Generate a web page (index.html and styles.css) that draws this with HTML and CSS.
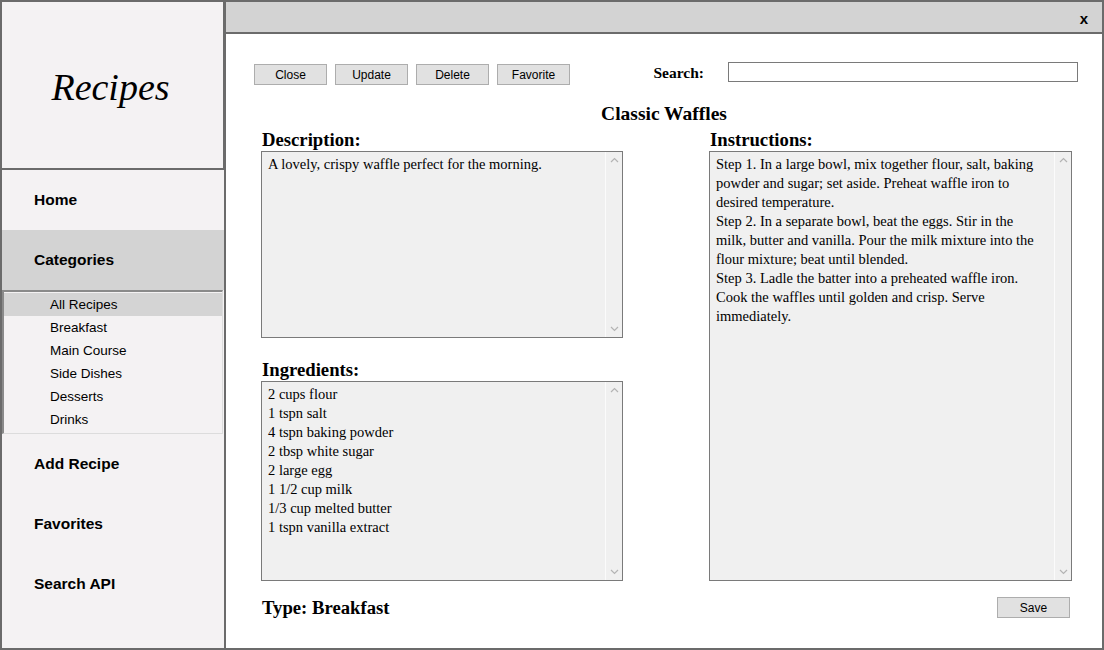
FILE: index.html
```html
<!DOCTYPE html>
<html>
<head>
<meta charset="utf-8">
<link rel="stylesheet" href="styles.css">
</head>
<body>
<div class="app">
  <aside class="sidebar">
    <div class="brand"><span class="brand-text">Recipes</span></div>
    <div class="nav-item">Home</div>
    <div class="nav-item active">Categories</div>
    <div class="cat-list">
      <div class="cat selected">All Recipes</div>
      <div class="cat">Breakfast</div>
      <div class="cat">Main Course</div>
      <div class="cat">Side Dishes</div>
      <div class="cat">Desserts</div>
      <div class="cat">Drinks</div>
    </div>
    <div class="nav-item">Add Recipe</div>
    <div class="nav-item">Favorites</div>
    <div class="nav-item">Search API</div>
  </aside>
  <main class="window">
    <div class="titlebar"><span class="close-x">x</span></div>
    <div class="content">
      <div class="toolbar">
        <div class="btn-group">
          <button class="btn">Close</button>
          <button class="btn">Update</button>
          <button class="btn">Delete</button>
          <button class="btn">Favorite</button>
        </div>
        <div class="search">
          <span class="search-label">Search:</span>
          <div class="search-input"></div>
        </div>
      </div>
      <h1 class="recipe-title">Classic Waffles</h1>
      <div class="columns">
        <div class="col">
          <div class="label">Description:</div>
          <div class="box box-desc">
            <div class="box-text">A lovely, crispy waffle perfect for the morning.</div>
            <div class="scroll">
              <svg class="chev" width="9" height="6" viewBox="0 0 9 6"><polyline points="1,5 4.5,1.5 8,5" fill="none" stroke="#b4b4b4" stroke-width="1.2"/></svg>
              <svg class="chev" width="9" height="6" viewBox="0 0 9 6"><polyline points="1,1 4.5,4.5 8,1" fill="none" stroke="#b4b4b4" stroke-width="1.2"/></svg>
            </div>
          </div>
          <div class="label label-ing">Ingredients:</div>
          <div class="box box-ing">
            <div class="box-text">2 cups flour<br>1 tspn salt<br>4 tspn baking powder<br>2 tbsp white sugar<br>2 large egg<br>1 1/2 cup milk<br>1/3 cup melted butter<br>1 tspn vanilla extract</div>
            <div class="scroll">
              <svg class="chev" width="9" height="6" viewBox="0 0 9 6"><polyline points="1,5 4.5,1.5 8,5" fill="none" stroke="#b4b4b4" stroke-width="1.2"/></svg>
              <svg class="chev" width="9" height="6" viewBox="0 0 9 6"><polyline points="1,1 4.5,4.5 8,1" fill="none" stroke="#b4b4b4" stroke-width="1.2"/></svg>
            </div>
          </div>
        </div>
        <div class="col">
          <div class="label">Instructions:</div>
          <div class="box box-inst">
            <div class="box-text">Step 1. In a large bowl, mix together flour, salt, baking<br>powder and sugar; set aside. Preheat waffle iron to<br>desired temperature.<br>Step 2. In a separate bowl, beat the eggs. Stir in the<br>milk, butter and vanilla. Pour the milk mixture into the<br>flour mixture; beat until blended.<br>Step 3. Ladle the batter into a preheated waffle iron.<br>Cook the waffles until golden and crisp. Serve<br>immediately.</div>
            <div class="scroll">
              <svg class="chev" width="9" height="6" viewBox="0 0 9 6"><polyline points="1,5 4.5,1.5 8,5" fill="none" stroke="#b4b4b4" stroke-width="1.2"/></svg>
              <svg class="chev" width="9" height="6" viewBox="0 0 9 6"><polyline points="1,1 4.5,4.5 8,1" fill="none" stroke="#b4b4b4" stroke-width="1.2"/></svg>
            </div>
          </div>
        </div>
      </div>
      <div class="footer">
        <div class="type">Type: Breakfast</div>
        <button class="btn btn-save">Save</button>
      </div>
    </div>
  </main>
</div>
</body>
</html>
```
FILE: styles.css
```css
* { box-sizing: border-box; }
html, body { margin: 0; padding: 0; }
body { width: 1104px; height: 650px; overflow: hidden; background: #ffffff; }

.app { display: flex; width: 1104px; height: 650px; }

.sidebar {
  width: 224px;
  height: 650px;
  background: #f4f2f3;
  border-left: 2px solid #6b6b6b;
  border-bottom: 2px solid #6b6b6b;
  display: flex;
  flex-direction: column;
  font-family: "Liberation Sans", Arial, sans-serif;
  color: #000;
}

.brand {
  height: 170px;
  border-top: 2px solid #6b6b6b;
  border-bottom: 2px solid #6b6b6b;
  border-right: 1px solid #6b6b6b;
  display: flex;
  align-items: center;
  justify-content: center;
  padding-right: 4px;
}
.brand-text {
  font-family: "Liberation Serif", "Times New Roman", serif;
  font-style: italic;
  font-size: 38px;
  margin-top: 4px;
}

.nav-item {
  height: 60px;
  display: flex;
  align-items: center;
  padding-left: 32px;
  font-size: 15.5px;
  font-weight: bold;
}
.nav-item:first-of-type { height: 59px; }
.nav-item.active { background: #d3d3d3; }

.cat-list {
  height: 144px;
  margin: 0 1px 0 0;
  border-top: 2px solid #8a8a8a;
  border-left: 2px solid #8a8a8a;
  border-right: 1px solid #dcdcdc;
  border-bottom: 1px solid #dcdcdc;
  background: #f4f2f3;
  padding-top: 1px;
}
.cat {
  height: 23px;
  display: flex;
  align-items: center;
  padding-left: 46px;
  font-size: 13.5px;
}
.cat.selected { background: #d4d4d4; }

.window {
  flex: 1;
  height: 650px;
  border: 2px solid #6b6b6b;
  display: flex;
  flex-direction: column;
  background: #ffffff;
}
.titlebar {
  height: 32px;
  background: #d3d3d3;
  border-bottom: 2px solid #6b6b6b;
  display: flex;
  align-items: center;
  justify-content: flex-end;
  padding-right: 14px;
  padding-top: 2px;
}
.close-x {
  font-family: "Liberation Sans", Arial, sans-serif;
  font-weight: bold;
  font-size: 15px;
}

.content {
  flex: 1;
  display: flex;
  flex-direction: column;
  font-family: "Liberation Serif", "Times New Roman", serif;
  color: #000;
}

.toolbar {
  display: flex;
  align-items: flex-start;
  margin-top: 28px;
  padding-left: 28px;
  padding-right: 24px;
}
.btn-group { display: flex; gap: 8px; margin-top: 2px; }
.btn {
  width: 73px;
  height: 21px;
  background: #e1e1e1;
  border: 1px solid #adadad;
  font-family: "Liberation Sans", Arial, sans-serif;
  font-size: 12px;
  color: #000;
  padding: 0;
  margin: 0;
}
.search {
  margin-left: auto;
  display: flex;
  align-items: center;
  gap: 24px;
}
.search-label {
  font-weight: bold;
  font-size: 15.5px;
  margin-top: 2px;
}
.search-input {
  width: 350px;
  height: 20px;
  border: 1px solid #7a7a7a;
  background: #fff;
}

.recipe-title {
  margin: 0;
  margin-top: 18px;
  text-align: center;
  font-size: 19.5px;
  line-height: 22px;
  font-weight: bold;
}

.columns {
  display: grid;
  grid-template-columns: 362px 363px;
  column-gap: 86px;
  padding-left: 35px;
  margin-top: 4px;
}
.col { display: flex; flex-direction: column; }
.label {
  font-weight: bold;
  font-size: 18.7px;
  line-height: 22px;
  padding-left: 1px;
}
.label-ing { margin-top: 21px; }

.box {
  display: flex;
  border: 1px solid #7a7a7a;
  background: #f0f0f0;
}
.box-desc { height: 187px; }
.box-ing { height: 200px; }
.box-inst { height: 430px; }
.box-text {
  flex: 1;
  padding: 3px 6px 2px 6px;
  font-size: 14.5px;
  line-height: 19px;
  white-space: nowrap;
}
.scroll {
  width: 17px;
  border-left: 1px solid #fbfbfb;
  display: flex;
  flex-direction: column;
  justify-content: space-between;
  align-items: center;
  padding: 5px 0 5px 0;
}
.chev { display: block; }

.footer {
  display: flex;
  align-items: center;
  justify-content: space-between;
  padding-left: 36px;
  padding-right: 32px;
  margin-top: 15px;
}
.type {
  font-weight: bold;
  font-size: 18.7px;
  line-height: 22px;
  margin-top: 1px;
}
.btn-save { width: 73px; height: 21px; }
```
